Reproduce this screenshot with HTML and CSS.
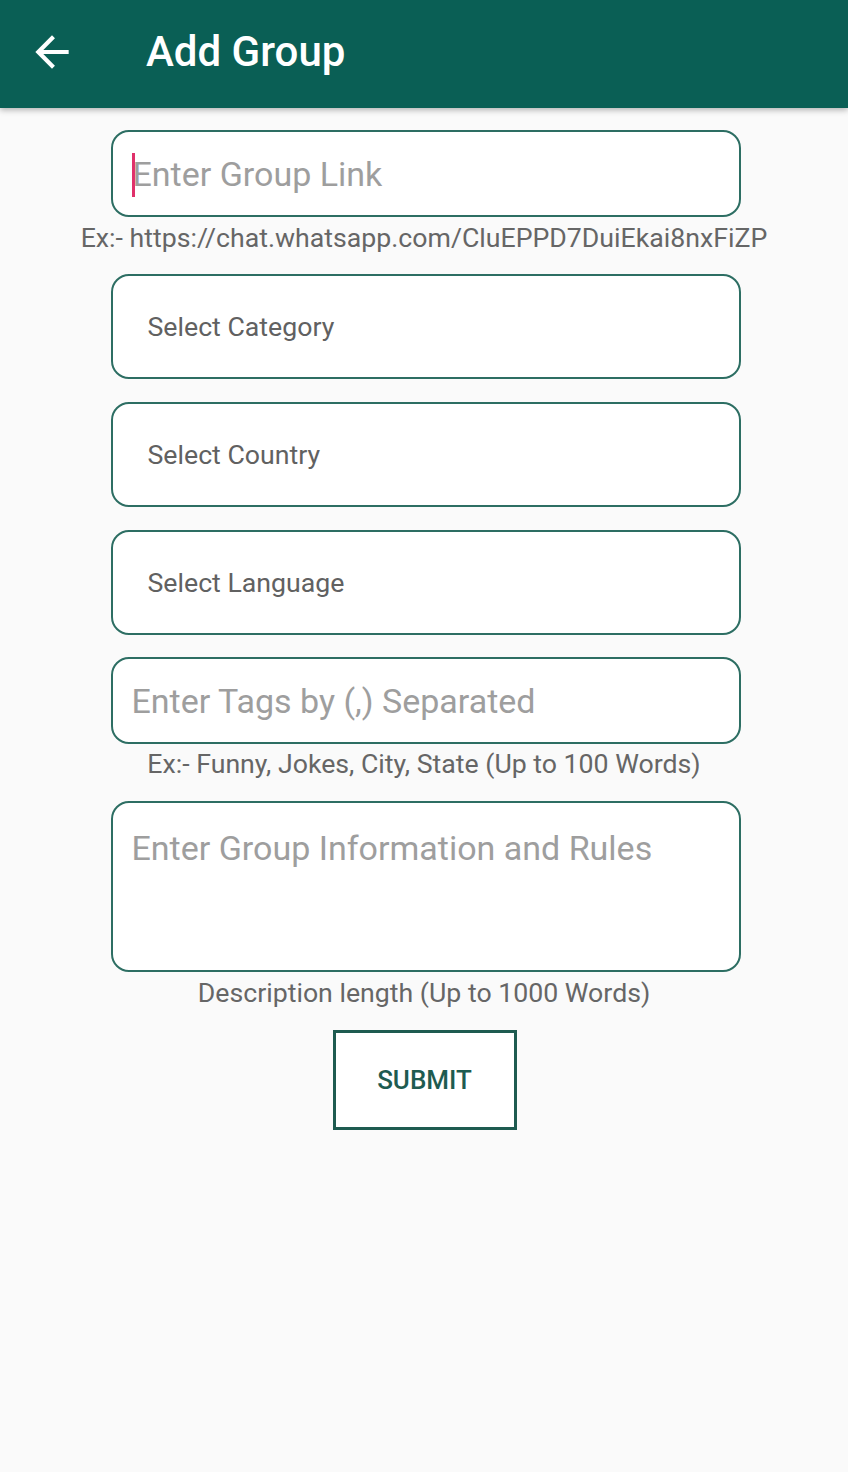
FILE: index.html
```html
<!DOCTYPE html>
<html>
<head>
<meta charset="utf-8">
<link rel="stylesheet" href="styles.css">
</head>
<body>
<header class="appbar">
  <svg class="back" viewBox="0 0 24 24" width="50" height="50"><path d="M20 11H7.83l5.59-5.59L12 4l-8 8 8 8 1.41-1.41L7.83 13H20v-2z" fill="#fff"/></svg>
  <h1 class="title">Add Group</h1>
</header>
<main class="form">
  <div class="field input"><span class="caret"></span><span class="ph">Enter Group Link</span></div>
  <p class="hint hint-link">Ex:- https://chat.whatsapp.com/CluEPPD7DuiEkai8nxFiZP</p>
  <div class="field select">Select Category</div>
  <div class="field select">Select Country</div>
  <div class="field select">Select Language</div>
  <div class="field input tags"><span class="ph">Enter Tags by (,) Separated</span></div>
  <p class="hint">Ex:- Funny, Jokes, City, State (Up to 100 Words)</p>
  <div class="field area"><span class="ph">Enter Group Information and Rules</span></div>
  <p class="hint">Description length (Up to 1000 Words)</p>
  <button class="submit">SUBMIT</button>
</main>
</body>
</html>
```

FILE: styles.css
```css
html, body {
  margin: 0;
  padding: 0;
  background: #fafafa;
  font-family: Roboto, "Liberation Sans", sans-serif;
}
.appbar {
  height: 108px;
  background: #0a5f55;
  display: flex;
  align-items: center;
  box-shadow: 0 2px 6px rgba(0,0,0,0.3);
  position: relative;
}
.back {
  margin-left: 27px;
  margin-top: -4px;
}
.title {
  margin: -6px 0 0 69px;
  color: #fff;
  font-size: 42px;
  font-weight: 500;
}
.form {
  display: flex;
  flex-direction: column;
  align-items: center;
  padding-top: 22px;
  padding-left: 3px;
}
.field {
  box-sizing: border-box;
  width: 630px;
  background: #fff;
  border: 2px solid #2d6e63;
  border-radius: 18px;
  display: flex;
  align-items: center;
}
.input {
  height: 87px;
  padding-left: 19px;
}
.ph {
  color: #9e9e9e;
  font-size: 34px;
}
.caret {
  width: 3px;
  height: 44px;
  background: #e0306a;
  margin-right: -2px;
  margin-top: 2px;
}
.select {
  height: 105px;
  padding-left: 35px;
  color: #616161;
  font-size: 26.7px;
  margin-bottom: 23px;
}
.hint {
  margin: 6px 0 23px;
  color: #666;
  font-size: 26.7px;
  line-height: 30px;
  margin-left: -3px;
}
.hint-link {
  margin-bottom: 21px;
}
.tags {
  margin-top: -1px;
}
.tags + .hint {
  margin-top: 5px;
  margin-bottom: 22px;
}
.area {
  height: 171px;
  align-items: flex-start;
  padding: 25px 0 0 19px;
}
.area + .hint {
  margin-top: 6px;
  margin-bottom: 22px;
}
.submit {
  width: 184px;
  height: 100px;
  background: #fff;
  border: 3px solid #1e5b50;
  border-radius: 0;
  color: #1e5b50;
  font-family: Roboto, "Liberation Sans", sans-serif;
  font-size: 26px;
  font-weight: 500;
  padding: 0;
  margin-left: -2px;
}
```
